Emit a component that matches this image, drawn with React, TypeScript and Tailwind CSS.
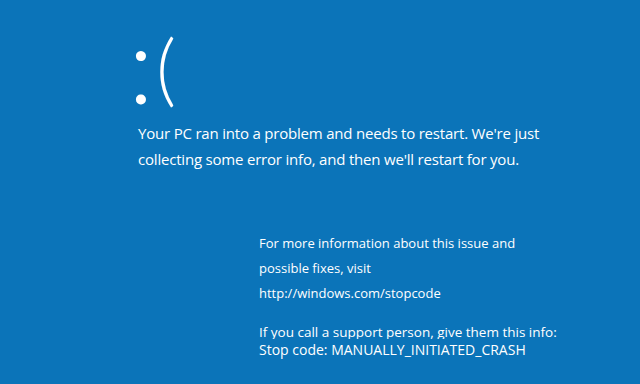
export default function App() {
  return (
    <div className="w-[640px] h-[384px] overflow-hidden bg-[#0b74b9] text-white font-['Open_Sans',sans-serif]">
      <div className="pl-[138px]">
        {/* sad face */}
        <div className="-ml-[10px] flex h-[120px] items-start font-['Lato',sans-serif] font-light leading-none">
          <span className="mt-[8px] w-[16px] text-center text-[108px]">:</span>
          <span className="ml-[7px] mt-[28px] w-[30px] text-center text-[78px]">(</span>
        </div>
        <p className="text-[15px] leading-[26px] tracking-[-0.2px]">
          Your PC ran into a problem and needs to restart. We're just
          <br />
          collecting some error info, and then we'll restart for you.
        </p>
        <div className="ml-[121px] mt-[59px]">
          <p className="text-[13px] leading-[25px]">
            For more information about this issue and
            <br />
            possible fixes, visit
            <br />
            http://windows.com/stopcode
          </p>
          <p className="mt-[19px] h-[13.5px] overflow-hidden text-[13.5px] leading-[15px]">
            If you call a support person, give them this info:
          </p>
          <p className="mt-[3px] text-[14px] leading-[16px]">Stop code: MANUALLY_INITIATED_CRASH</p>
        </div>
      </div>
    </div>
  );
}
